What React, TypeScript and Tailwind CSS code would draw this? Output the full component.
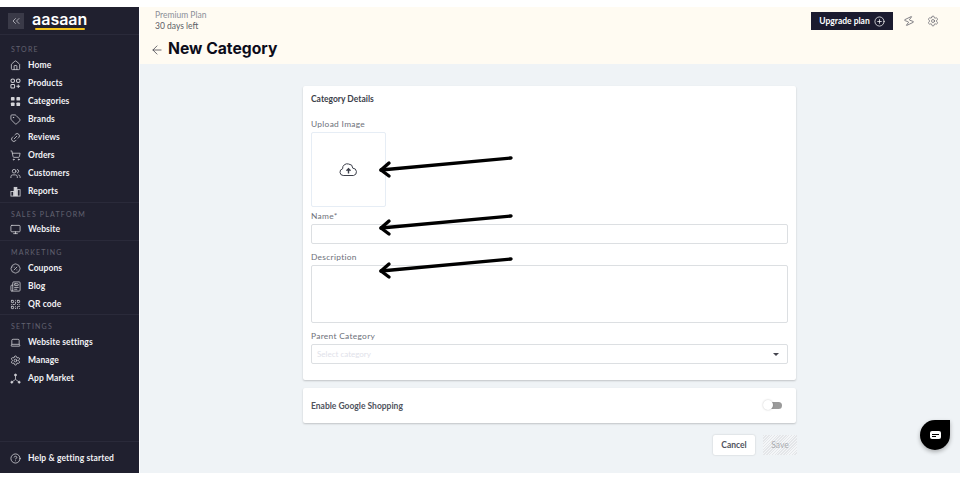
import { ArrowLeft, ChevronsLeft, CirclePlus, Home, Tag, Link2, ShoppingCart, Users, Monitor, BadgePercent, Newspaper, QrCode, Settings, CircleHelp, Laptop, Zap } from "lucide-react";
import type { ComponentType } from "react";

type IconProps = { size?: number; strokeWidth?: number; className?: string };

function ProductsIcon({ className }: IconProps) {
  return (
    <svg className={className} width="11" height="11" viewBox="0 0 12 12" fill="none" stroke="currentColor" strokeWidth="1.1">
      <circle cx="3" cy="3" r="2" />
      <circle cx="9" cy="3" r="2" />
      <rect x="1" y="7" width="4" height="4" rx="1" />
      <path d="M9 7v4M7 9h4" />
    </svg>
  );
}

function CategoriesIcon({ className }: IconProps) {
  return (
    <svg className={className} width="11" height="11" viewBox="0 0 12 12" fill="currentColor">
      <rect x="1" y="1" width="4" height="4" rx="1" />
      <rect x="7" y="1" width="4" height="4" rx="1" />
      <rect x="1" y="7" width="4" height="4" rx="1" />
      <rect x="7" y="7" width="4" height="4" rx="1" />
    </svg>
  );
}

function ReviewsIcon({ className }: IconProps) {
  return <Link2 size={11} strokeWidth={1.7} className={`-rotate-45 ${className}`} />;
}

function ReportsIcon({ className }: IconProps) {
  return (
    <svg className={className} width="11" height="11" viewBox="0 0 12 12" fill="none" stroke="currentColor" strokeWidth="0.9">
      <rect x="1" y="6" width="3" height="5" />
      <rect x="4.5" y="1.5" width="3" height="9.5" fill="currentColor" />
      <rect x="8" y="4" width="3" height="7" />
    </svg>
  );
}

function MarketIcon({ className }: IconProps) {
  return (
    <svg className={className} width="11" height="11" viewBox="0 0 12 12" fill="none" stroke="currentColor" strokeWidth="0.8">
      <path d="M6 3V7L2.5 9.5M6 7l3.5 2.5" />
      <circle cx="6" cy="2.2" r="1.1" fill="currentColor" />
      <circle cx="2" cy="10" r="1.1" fill="currentColor" />
      <circle cx="10" cy="10" r="1.1" fill="currentColor" />
    </svg>
  );
}

type NavItem = { label: string; icon: ComponentType<IconProps> };

const sections: { title: string; pad: string; titleHeight: string; items: NavItem[] }[] = [
  {
    title: "STORE",
    pad: "pt-[8px] pb-[2px] border-b",
    titleHeight: "h-[13px]",
    items: [
      { label: "Home", icon: Home },
      { label: "Products", icon: ProductsIcon },
      { label: "Categories", icon: CategoriesIcon },
      { label: "Brands", icon: Tag },
      { label: "Reviews", icon: ReviewsIcon },
      { label: "Orders", icon: ShoppingCart },
      { label: "Customers", icon: Users },
      { label: "Reports", icon: ReportsIcon },
    ],
  },
  { title: "SALES PLATFORM", pad: "pt-[5px] pb-[2px] border-b", titleHeight: "h-[12px]", items: [{ label: "Website", icon: Monitor }] },
  {
    title: "MARKETING",
    pad: "pt-[5px] pb-[1px] border-b",
    titleHeight: "h-[13px]",
    items: [
      { label: "Coupons", icon: BadgePercent },
      { label: "Blog", icon: Newspaper },
      { label: "QR code", icon: QrCode },
    ],
  },
  {
    title: "SETTINGS",
    pad: "pt-[5px]",
    titleHeight: "h-[13px]",
    items: [
      { label: "Website settings", icon: Laptop },
      { label: "Manage", icon: Settings },
      { label: "App Market", icon: MarketIcon },
    ],
  },
];

function Arrow({ className }: { className: string }) {
  return (
    <svg className={className} width="136" height="26" viewBox="0 0 136 26" fill="none" stroke="#000" strokeLinecap="round" strokeLinejoin="round">
      <path d="M134 2 L4 14" strokeWidth="3.4" />
      <path d="M12 7 L4 14 L12 20" strokeWidth="3.4" />
    </svg>
  );
}

export default function App() {
  return (
    <div className="relative w-[960px] h-[480px] overflow-hidden bg-white py-[7px] flex font-['Lato',sans-serif]">
      <aside className="w-[139px] shrink-0 bg-[#20202f] flex flex-col text-white">
        <div className="h-[28px] shrink-0 flex items-center pl-[8px] gap-[8px] border-b border-[#2a2a3a]">
          <div className="w-[16px] h-[16px] bg-[#3a3a48] flex items-center justify-center">
            <ChevronsLeft size={12} strokeWidth={1.5} className="text-[#c9c9d0]" />
          </div>
          <div className="relative text-[16px] leading-[20px] font-semibold font-['Inter',sans-serif] -mt-[3px]">
            aasaan
            <span className="absolute left-[3px] right-[2px] bottom-[-1px] h-[2px] rounded-full bg-[#f5c518]" />
          </div>
        </div>
        {sections.map((section) => (
          <div key={section.title} className={`shrink-0 border-[#2a2a3a] ${section.pad}`}>
            <div className={`${section.titleHeight} pl-[11px] text-[7px] leading-[12px] tracking-[1.2px] text-[#62626f]`}>{section.title}</div>
            {section.items.map((item) => (
              <div key={item.label} className="h-[18px] flex items-center pl-[10px] gap-[7px]">
                <item.icon size={11} strokeWidth={1.7} className="text-[#d5d5da] w-[11px] shrink-0" />
                <span className="text-[8.5px] font-bold tracking-[0.1px] text-[#f2f2f5]">{item.label}</span>
              </div>
            ))}
          </div>
        ))}
        <div className="flex-1" />
        <div className="h-[32px] shrink-0 border-t border-[#2a2a3a] pt-[2px] flex items-center pl-[10px] gap-[7px]">
          <CircleHelp size={11} strokeWidth={1.7} className="text-[#d5d5da]" />
          <span className="text-[8.5px] font-bold tracking-[0.1px] text-[#f2f2f5]">Help &amp; getting started</span>
        </div>
      </aside>

      <main className="ml-[1px] flex-1 flex flex-col bg-[#eff3f6]">
        <header className="h-[57px] shrink-0 bg-[#fffbf2] flex justify-between pl-[12px] pr-[21px]">
          <div>
            <div className="pl-[3px] pt-[3px] text-[8.5px] leading-[11px] text-[#8b8f99]">Premium Plan</div>
            <div className="pl-[3px] text-[8.5px] leading-[11px] text-[#5b5d66]">30 days left</div>
            <div className="flex items-center gap-[4px] mt-[6px] -ml-[1px]">
              <ArrowLeft size={14} strokeWidth={1.3} className="text-[#3d3d48] mt-[2px] -ml-[1px]" />
              <h1 className="text-[15.7px] leading-[22px] font-bold text-[#0c0c1a] font-['Inter',sans-serif]">New Category</h1>
            </div>
          </div>
          <div className="flex items-start pt-[5px]">
            <button className="w-[82px] h-[18px] bg-[#1b1b2f] text-white text-[8.5px] font-bold flex items-center justify-center gap-[4px]">
              Upgrade plan
              <CirclePlus size={11} strokeWidth={1.6} />
            </button>
            <Zap size={12} strokeWidth={1.4} className="text-[#5f5f68] mt-[3px] ml-[10px] rotate-[20deg]" />
            <Settings size={12} strokeWidth={1.4} className="text-[#5f5f68] mt-[3px] ml-[12px]" />
          </div>
        </header>

        <div className="w-[493px] ml-[163px] mt-[22px] flex flex-col">
          <section className="h-[294px] bg-white rounded-[2px] shadow-[0_1px_2px_rgba(0,0,0,0.2)] px-[8px]">
            <div className="pt-[8px] text-[8.5px] leading-[11px] font-bold text-[#3c3f4a]">Category Details</div>
            <label className="block mt-[14px] text-[8.4px] leading-[11px] tracking-[0.3px] text-[#6d7079]">Upload Image</label>
            <div className="mt-[2px] w-[75px] h-[75px] border border-[#e6edf5] rounded-[2px] flex items-center justify-center">
              <svg width="19" height="15" viewBox="0 0 19 15" fill="none" stroke="#3c3f4a" strokeWidth="1" strokeLinejoin="round">
                <path d="M5 13.5H4.2A3.4 3.4 0 0 1 3.6 6.8 A4.6 4.6 0 0 1 9.6 2 A4.4 4.4 0 0 1 13.8 6.2 A3.7 3.7 0 0 1 14.6 13.5Z" />
                <path d="M9.5 11.5V7M7.5 8.8L9.5 6.6l2 2.2" strokeWidth="1.4" />
              </svg>
            </div>
            <label className="block mt-[4px] text-[8.4px] leading-[11px] tracking-[0.3px] text-[#6d7079]">Name*</label>
            <div className="mt-[2px] h-[20px] border border-[#dcdfe2] rounded-[2px]" />
            <label className="block mt-[8px] text-[8.4px] leading-[11px] tracking-[0.3px] text-[#6d7079]">Description</label>
            <div className="mt-[2px] h-[58px] border border-[#dcdfe2] rounded-[2px]" />
            <label className="block mt-[8px] text-[8.4px] leading-[11px] tracking-[0.3px] text-[#6d7079]">Parent Category</label>
            <div className="mt-[2px] h-[20px] border border-[#dcdfe2] rounded-[2px] flex items-center justify-between pl-[5px] pr-[8px]">
              <span className="text-[8px] text-[#dfe2ea]">Select category</span>
              <span className="w-0 h-0 border-x-[3px] border-x-transparent border-t-[3px] border-t-[#45454f]" />
            </div>
          </section>

          <section className="h-[35px] mt-[8px] bg-white rounded-[2px] shadow-[0_1px_2px_rgba(0,0,0,0.2)] pl-[8px] pr-[14px] flex items-center justify-between">
            <span className="text-[8.5px] font-bold text-[#50535d] mt-[2px]">Enable Google Shopping</span>
            <div className="relative w-[18px] h-[7px] rounded-full bg-[#9a9a9a]">
              <span className="absolute left-[-1px] top-[-2px] w-[10px] h-[10px] rounded-full bg-white shadow-[0_0_2px_rgba(0,0,0,0.25)]" />
            </div>
          </section>

          <div className="mt-[12px] -mr-[1px] flex justify-end gap-[8px]">
            <button className="w-[42px] h-[20px] bg-white rounded-[2px] shadow-[0_0_2px_rgba(0,0,0,0.2)] text-[8.5px] font-bold text-[#50535d]">Cancel</button>
            <button className="w-[34px] h-[20px] text-[8.5px] text-[#a9abb0] bg-[repeating-linear-gradient(135deg,#e4e6e9_0,#e4e6e9_1px,#f4f6f8_1px,#f4f6f8_2px)]">Save</button>
          </div>
        </div>
      </main>

      <Arrow className="absolute left-[377px] top-[156px]" />
      <Arrow className="absolute left-[377px] top-[214px]" />
      <Arrow className="absolute left-[377px] top-[257px]" />

      <div className="absolute left-[920px] top-[420px] w-[30px] h-[30px] bg-black rounded-full rounded-tr-[4px] shadow-[0_2px_4px_rgba(0,0,0,0.3)] flex items-center justify-center">
        <div className="w-[11px] h-[8px] bg-white rounded-[2px] flex flex-col justify-center gap-[1px] pl-[2px]">
          <span className="block w-[7px] h-[1px] bg-black" />
          <span className="block w-[4px] h-[1px] bg-black" />
        </div>
      </div>
    </div>
  );
}
